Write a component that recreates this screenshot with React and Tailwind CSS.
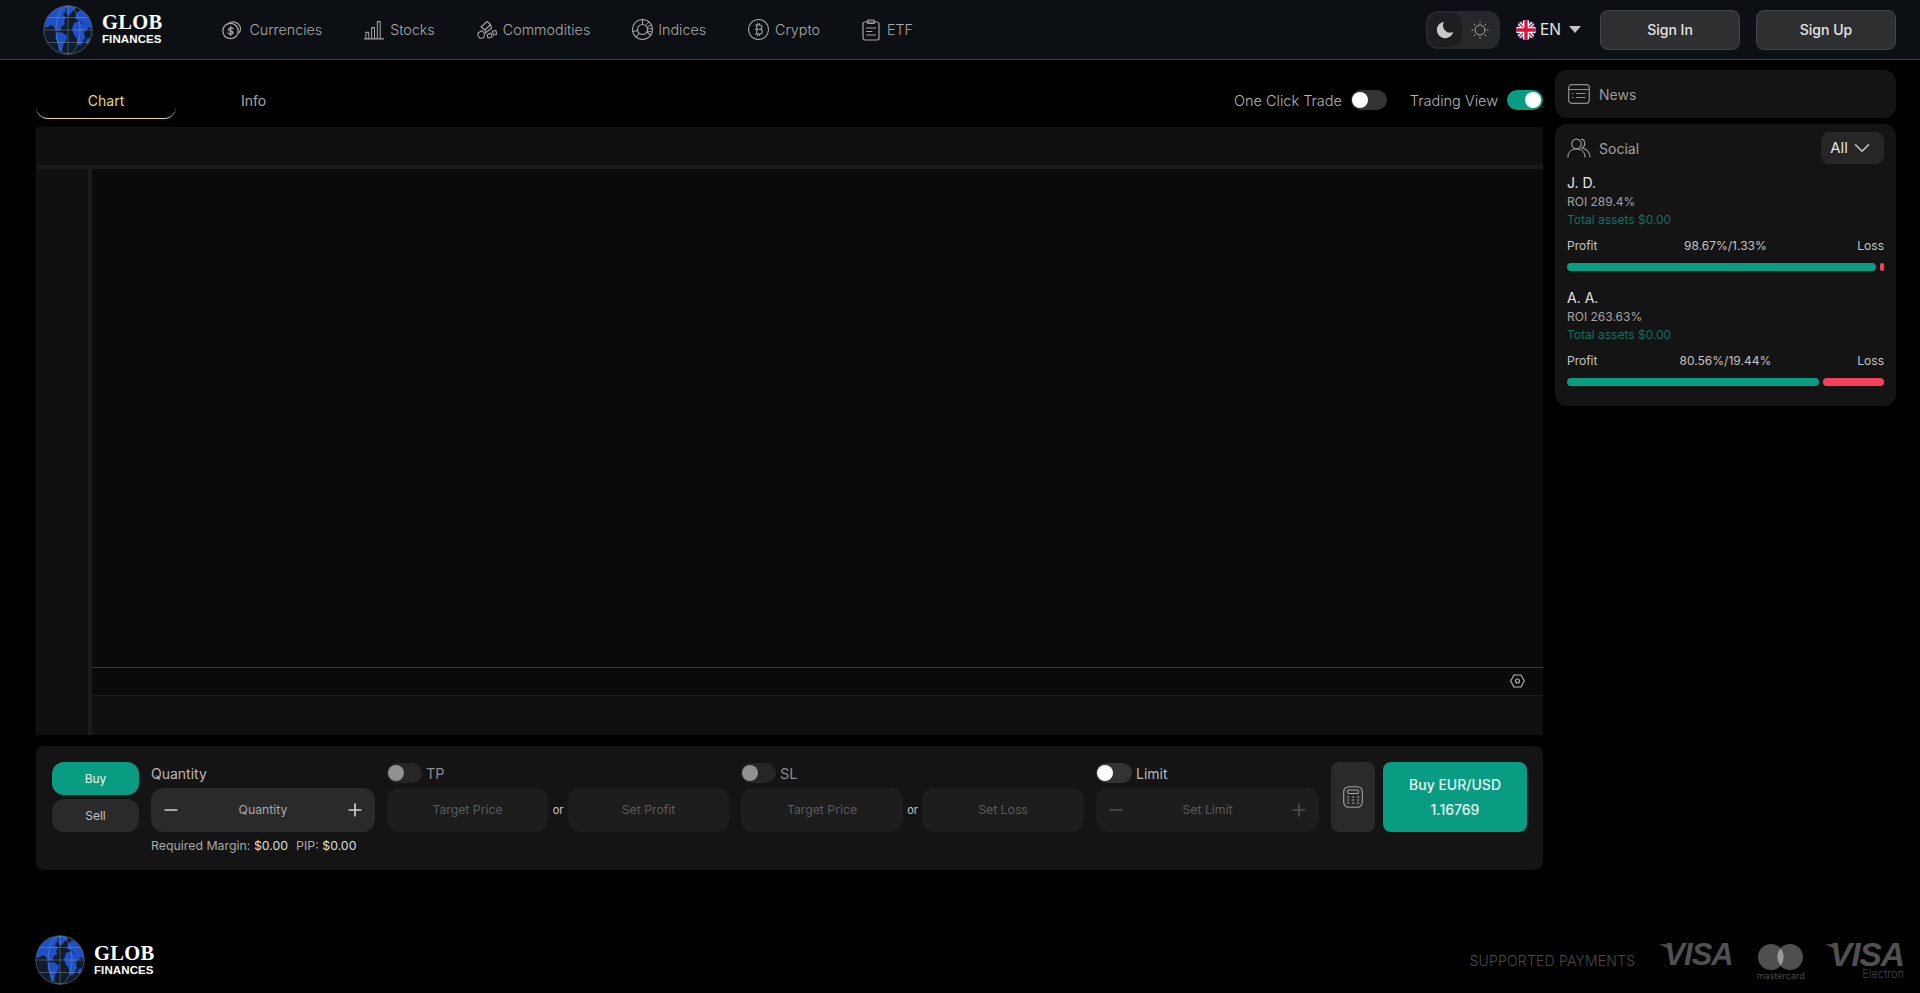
import React from "react";
import { ChevronDown, Minus, Plus } from "lucide-react";

function Globe({ size = 50 }) {
  return (
    <svg width={size} height={size} viewBox="0 0 100 100" className="shrink-0">
      <circle cx="50" cy="50" r="48.5" fill="#0f1c2c" />
      <clipPath id={`g${size}`}><circle cx="50" cy="50" r="48" /></clipPath>
      <g clipPath={`url(#g${size})`} fill="#1f50c8">
        <path d="M2 46 C4 26 14 10 28 5 L44 2 L46 12 L40 20 L46 25 L42 33 L45 38 L38 42 L34 52 L26 50 L22 44 L16 40 L10 44 Z" />
        <path d="M40 3 L60 1 L68 5 L58 14 L52 22 L47 16 L48 9 Z" />
        <path d="M27 54 L38 55 L48 61 L47 70 L41 78 L37 93 L32 93 L30 78 L25 66 Z" />
        <path d="M62 36 L72 32 L80 38 L86 42 L87 48 L82 54 L84 66 L76 80 L70 80 L67 66 L61 58 L58 48 Z" />
        <path d="M64 28 L66 18 L74 10 L84 14 L92 24 L100 38 L96 48 L91 44 L87 52 L83 40 L72 30 Z" />
        <path d="M85 70 L92 66 L96 74 L89 80 Z" />
      </g>
      <g fill="none" stroke="#9aa5a8" strokeWidth="1.1" opacity="0.75">
        <circle cx="50" cy="50" r="48.5" />
        <ellipse cx="50" cy="50" rx="24" ry="48" />
        <path d="M50 2 V98 M2 50 H98 M9 25 H91 M9 75 H91" />
      </g>
    </svg>
  );
}

function Logo({ size = 50, gap = "gap-2" }) {
  return (
    <div className={`flex items-center ${gap}`}>
      <Globe size={size} />
      <div className="flex flex-col items-stretch text-white">
        <span className="font-['Liberation_Serif',serif] font-bold text-[20.5px] leading-[19px] tracking-[0.3px]">GLOB</span>
        <span className="font-['Liberation_Sans',sans-serif] font-bold text-[11.5px] leading-[13px] mt-[1px] tracking-[0.1px]">FINANCES</span>
      </div>
    </div>
  );
}

const ic = { fill: "none", stroke: "#a3a3a3", strokeWidth: 1.1, strokeLinecap: "round", strokeLinejoin: "round" };

const CurrencyIcon = () => (
  <svg width="20" height="20" viewBox="0 0 20 20" {...ic}>
    <path d="M5 4.5 A8 8 0 0 1 18.5 7.5 A8 8 0 0 1 17 13" />
    <circle cx="8.5" cy="11" r="7.7" strokeWidth="1.3" />
    <path d="M11 8.8 C10.4 7.7 6.3 7.6 6.3 9.6 C6.3 11.6 11 10.4 11 12.6 C11 14.5 6.8 14.4 6 13 M8.6 6.6 V15.4" strokeWidth="1.3" />
  </svg>
);
const StocksIcon = () => (
  <svg width="20" height="20" viewBox="0 0 21 20" {...ic}>
    <path d="M0.5 19.3 H20.5 M2 19 V12.5 H5 V19 M8 19 V7.5 H11 V19 M14 19 V1.2 H17 V19" />
  </svg>
);
const CommoditiesIcon = () => (
  <svg width="20" height="20" viewBox="0 0 20 20" {...ic}>
    <path d="M4 7 L10 1.5 L13.5 4.5 L8 10 Z M8 10 L8.5 13 L14.5 8 L13.5 4.5 M1 13 L5 10.5 L7.5 13.5 L7 17.5 L3 18.5 L1 15.5 Z M10 15 L14 13 L15 17 L11 18 Z M15.5 11 L19 10.5 L19.5 14.5 L16.5 15 Z" />
  </svg>
);
const IndicesIcon = () => (
  <svg width="21" height="21" viewBox="0 0 21 21" {...ic}>
    <circle cx="10.5" cy="10.5" r="10" />
    <circle cx="10.5" cy="10.5" r="5" />
    <path d="M10.5 .5 V5.5 M.8 12.5 L5.8 11.5 M15 13 L19 16.5 M4 18 L7 14.5" />
    <path d="M14 6 L17 3 M15.5 8 L19.5 6 M15.5 10 L20 9.5 M15 12 L20 13" strokeWidth="0.9" />
  </svg>
);
const CryptoIcon = () => (
  <svg width="21" height="21" viewBox="0 0 21 21" {...ic}>
    <circle cx="10.5" cy="10.5" r="10" />
    <path d="M7.5 6 H12 C14.5 6 14.5 10.2 12 10.2 H7.5 M12 10.2 C15 10.2 15 15 12 15 H7.5 M8.8 6 V15 M9.5 4.5 V6 M11.5 4.5 V6 M9.5 15 V16.5 M11.5 15 V16.5" />
  </svg>
);
const EtfIcon = () => (
  <svg width="18" height="22" viewBox="0 0 18 22" {...ic} strokeWidth="1.2">
    <rect x="1" y="3" width="16" height="18" rx="2" />
    <rect x="5.5" y="1" width="7" height="3.5" rx="1" />
    <path d="M4.5 9 H13.5 M4.5 12.5 H10 M4.5 16 H13.5" />
  </svg>
);
const MoonIcon = () => (
  <svg width="18" height="18" viewBox="0 0 18 18">
    <path d="M8 .8 A8.3 8.3 0 1 0 17.2 11 A7.2 7.2 0 0 1 8 .8 Z" fill="#c9c9c9" />
  </svg>
);
const SunIcon = () => (
  <svg width="18" height="18" viewBox="0 0 18 18" fill="none" stroke="#a3a3a3" strokeWidth="1" strokeLinecap="round">
    <circle cx="9" cy="9" r="5" />
    <path d="M9 .8 V1.8 M9 16.2 V17.2 M.8 9 H1.8 M16.2 9 H17.2 M3.2 3.2 L3.9 3.9 M14.1 14.1 L14.8 14.8 M3.2 14.8 L3.9 14.1 M14.1 3.9 L14.8 3.2" />
  </svg>
);
const Flag = () => (
  <svg width="20" height="20" viewBox="0 0 20 20" className="shrink-0">
    <clipPath id="fl"><circle cx="10" cy="10" r="10" /></clipPath>
    <g clipPath="url(#fl)">
      <rect width="20" height="20" fill="#1f3a93" />
      <path d="M0 0 L20 20 M20 0 L0 20" stroke="#fff" strokeWidth="4" />
      <path d="M0 0 L20 20 M20 0 L0 20" stroke="#d8143a" strokeWidth="1.4" />
      <path d="M10 0 V20 M0 10 H20" stroke="#fff" strokeWidth="6" />
      <path d="M10 0 V20 M0 10 H20" stroke="#d8143a" strokeWidth="3.4" />
    </g>
  </svg>
);
const NewsIcon = () => (
  <svg width="22" height="20" viewBox="0 0 22 20" fill="none" stroke="#8f8f8f" strokeWidth="1.2" strokeLinecap="round">
    <rect x=".7" y=".7" width="20.6" height="18.6" rx="3" />
    <path d="M.7 5.5 H21.3 M8.5 9.5 H17 M8.5 13.5 H17 M4.5 9.5 H5 M4.5 13.5 H5" />
  </svg>
);
const SocialIcon = () => (
  <svg width="24" height="20" viewBox="0 0 24 20" fill="none" stroke="#9a9a9a" strokeWidth="1.2" strokeLinecap="round">
    <circle cx="9.5" cy="6" r="4.8" />
    <path d="M1 19 C1 14 4.5 11 9.5 11 C14.5 11 18 14 18 19 M14.5 1.4 C18.5 1.6 19 8 15 10 C19 10.8 23 14 23 19" />
  </svg>
);
const CalcIcon = () => (
  <svg width="20" height="22" viewBox="0 0 20 22" fill="none" stroke="#a3a3a3" strokeWidth="1.1" strokeLinecap="round">
    <rect x=".7" y=".7" width="18.6" height="20.6" rx="5" />
    <rect x="4.5" y="4" width="11" height="3.5" rx="1.2" />
    <path d="M5 11 H5.4 M10 11 H10.4 M15 11 H15.4 M5 14 H5.4 M10 14 H10.4 M15 14 H15.4 M5 17 H5.4 M10 17 H10.4 M15 17 H15.4" strokeWidth="1.5" />
  </svg>
);

function NavItem({ icon, label, gap = "gap-[7px]" }) {
  return (
    <div className={`flex items-center ${gap} text-[14.3px] font-light text-[#a8a8a8]`}>
      {icon}
      <span>{label}</span>
    </div>
  );
}

function Toggle({ on, dim }) {
  return (
    <span className={`relative block ${dim ? "w-[35px]" : "w-[36px]"} h-[20px] rounded-full ${on ? "bg-[#0a9c82]" : dim ? "bg-[#262626]" : "bg-[#333333]"}`}>
      <span className={`absolute top-[2px] w-[16px] h-[16px] rounded-full ${on ? "right-[2px] bg-white" : dim ? "left-[1px] bg-[#919191]" : "left-[1px] bg-white"}`} />
    </span>
  );
}

function Stat({ name, roi, pct, green, red, mt }) {
  return (
    <div className={mt}>
      <div className="text-[14px] leading-[18px] text-[#e5e5e5]">{name}</div>
      <div className="text-[12px] leading-[18px] text-[#a3a3a3] mt-[1px]">ROI {roi}</div>
      <div className="text-[12px] leading-[18px] text-[#116f5c]">Total assets $0.00</div>
      <div className="flex justify-between text-[12px] leading-[18px] text-[#c4c4c4] mt-[8px]">
        <span>Profit</span>
        <span className="mr-[4px]">{pct}</span>
        <span>Loss</span>
      </div>
      <div className="flex gap-[4px] h-[8px] mt-[8px]">
        <div className="rounded-full bg-[#0a9c82]" style={{ width: green }} />
        <div className="rounded-full bg-[#f6415c]" style={{ width: red }} />
      </div>
    </div>
  );
}

function Field({ label, w, muted, buttons }) {
  return (
    <div className={`flex items-center h-[44px] rounded-xl ${muted ? "bg-[#1d1d1d]" : "bg-[#2a2a2a]"} ${w}`}>
      {buttons && <Minus size={20} strokeWidth={2} className={`ml-[10px] shrink-0 ${muted ? "text-[#4f4f4f]" : "text-[#d0d0d0]"}`} />}
      <span className={`flex-1 text-center text-[12.25px] ${muted ? "text-[#5a5a5a]" : "text-[#a8a8a8]"}`}>{label}</span>
      {buttons && <Plus size={20} strokeWidth={2} className={`mr-[10px] shrink-0 ${muted ? "text-[#4f4f4f]" : "text-[#d0d0d0]"}`} />}
    </div>
  );
}

function VisaMark({ electron }) {
  return (
    <div className="relative flex flex-col items-end">
      <span className={`relative font-['Liberation_Sans',sans-serif] font-bold italic text-[#505050] leading-[24px] tracking-[-1px] ${electron ? "text-[33.5px]" : "text-[31px]"}`}>
        <svg width="13" height="8" viewBox="0 0 14 8" className="absolute -left-[5px] top-[1px]">
          <path d="M0 0 H10 L14 8 C10 4 5 2 0 0 Z" fill="#505050" />
        </svg>
        VISA
      </span>
      {electron && <span className="text-[11px] leading-[11px] font-light text-[#444444] mt-[2px]">Electron</span>}
    </div>
  );
}

export default function App() {
  return (
    <div className="min-h-[993px] bg-black font-[Inter,sans-serif] flex flex-col overflow-hidden">
      <header className="h-[60px] shrink-0 flex items-center bg-[#0c1014] border-b border-[#3a3a3a] pl-[43px] pr-[24px]">
        <Logo size={50} gap="gap-[9px]" />
        <nav className="flex items-center gap-[42px] ml-[60px]">
          <NavItem icon={<CurrencyIcon />} label="Currencies" />
          <NavItem icon={<StocksIcon />} label="Stocks" gap="gap-[6px]" />
          <NavItem icon={<CommoditiesIcon />} label="Commodities" gap="gap-[6px]" />
          <NavItem icon={<IndicesIcon />} label="Indices" gap="gap-[5px]" />
          <NavItem icon={<CryptoIcon />} label="Crypto" gap="gap-[6px]" />
          <NavItem icon={<EtfIcon />} label="ETF" />
        </nav>
        <div className="ml-auto flex items-center">
          <div className="flex items-center w-[74px] h-[38px] rounded-xl bg-[#26282a] p-[2px]">
            <div className="w-[34px] h-[34px] rounded-[10px] bg-[#1c1e20] flex items-center justify-center"><MoonIcon /></div>
            <div className="flex-1 flex items-center justify-center"><SunIcon /></div>
          </div>
          <div className="flex items-center ml-[16px] gap-[4px]">
            <Flag />
            <span className="text-[15.5px] text-[#e5e5e5]">EN</span>
            <span className="ml-[4px] w-0 h-0 border-x-[6px] border-x-transparent border-t-[7px] border-t-[#c4c4c4]" />
          </div>
          <button className="ml-[19px] w-[140px] h-[40px] rounded-lg bg-[#2e2f30] border border-[#454647] text-[14px] font-medium text-[#e5e5e5]">Sign In</button>
          <button className="ml-[16px] w-[140px] h-[40px] rounded-lg bg-[#2e2f30] border border-[#454647] text-[14px] font-medium text-[#e5e5e5]">Sign Up</button>
        </div>
      </header>

      <main className="flex gap-[12px] pl-[36px] pr-[24px] pt-[10px]">
        <div className="w-[1507px] shrink-0">
          <div className="flex items-center h-[48px] mt-[1px] mb-[8px]">
            <div className="w-[140px] h-[38px] mt-[10px] pt-[1px] flex items-center justify-center text-[14px] text-[#e8d87a] border-b border-[#e8d87a] rounded-b-xl">Chart</div>
            <div className="ml-[65px] w-[24px] text-center text-[14px] text-[#a8a8a8] mt-[10px]">Info</div>
            <div className="ml-auto flex items-center mt-[10px] text-[14.5px] font-light text-[#b4b4b4]">
              <span className="pt-[1px]">One Click Trade</span>
              <span className="ml-[9px]"><Toggle /></span>
              <span className="ml-[23px] pt-[1px]">Trading View</span>
              <span className="ml-[9px]"><Toggle on /></span>
            </div>
          </div>

          <div className="h-[608px] flex flex-col bg-[#101012]">
            <div className="h-[38px] shrink-0" />
            <div className="h-[4px] shrink-0 bg-[#1a1b1d]" />
            <div className="flex-1 flex min-h-0">
              <div className="w-[52px] shrink-0" />
              <div className="w-[4px] shrink-0 bg-[#1a1b1d]" />
              <div className="flex-1 flex flex-col">
                <div className="flex-1 bg-[#0a0a0c]" />
                <div className="h-[28px] shrink-0 bg-[#0a0a0c] border-t border-[#3a3a3c] flex items-center justify-end pr-[18px] pb-[1px]">
                  <svg width="15" height="14" viewBox="0 0 15 14" fill="none" stroke="#b8b8b8" strokeWidth="1.1">
                    <path d="M4 1 H11 L14.3 7 L11 13 H4 L.7 7 Z" />
                    <circle cx="7.5" cy="7" r="2" />
                  </svg>
                </div>
                <div className="h-[40px] shrink-0 border-t border-[#1c1c1e]" />
              </div>
            </div>
          </div>

          <section className="mt-[11px] h-[124px] rounded-lg bg-[#141414] flex items-start gap-[12px] pl-[16px] pr-[16px] pt-[16px]">
            <div className="w-[87px] shrink-0 flex flex-col gap-[4px]">
              <div className="h-[33px] rounded-xl bg-[#0a9c82] flex items-center justify-center text-[12px] text-[#e6f5f1]">Buy</div>
              <div className="h-[33px] rounded-xl bg-[#2a2a2a] flex items-center justify-center text-[12px] text-[#c4c4c4]">Sell</div>
            </div>
            <div className="w-[224px] shrink-0">
              <div className="h-[26px] text-[14px] leading-[24px] text-[#b8b8b8]">Quantity</div>
              <Field label="Quantity" buttons />
              <div className="mt-[5px] text-[12.35px] leading-[18px] text-[#a8a8a8]">
                Required Margin: <span className="text-[#dedede]">$0.00</span><span className="ml-[8px]">PIP: </span><span className="text-[#dedede]">$0.00</span>
              </div>
            </div>
            <div className="w-[342px] shrink-0">
              <div className="h-[26px] flex items-start gap-[4px] pt-[1px]"><Toggle dim /><span className="text-[14.5px] leading-[22px] text-[#8a8a8a]">TP</span></div>
              <div className="flex items-center">
                <Field label="Target Price" muted w="w-[161px]" />
                <span className="w-[20px] text-center text-[11px] text-[#c4c4c4]">or</span>
                <Field label="Set Profit" muted w="w-[161px]" />
              </div>
            </div>
            <div className="w-[343px] shrink-0">
              <div className="h-[26px] flex items-start gap-[4px] pt-[1px]"><Toggle dim /><span className="text-[14.5px] leading-[22px] text-[#8a8a8a]">SL</span></div>
              <div className="flex items-center">
                <Field label="Target Price" muted w="w-[162px]" />
                <span className="w-[19px] text-center text-[11px] text-[#c4c4c4]">or</span>
                <Field label="Set Loss" muted w="w-[162px]" />
              </div>
            </div>
            <div className="w-[223px] shrink-0">
              <div className="h-[26px] flex items-start gap-[4px] pt-[1px]"><Toggle /><span className="text-[14px] leading-[22px] text-[#b8b8b8]">Limit</span></div>
              <Field label="Set Limit" muted buttons />
            </div>
            <div className="w-[44px] h-[70px] shrink-0 rounded-lg bg-[#2a2a2a] flex items-center justify-center"><CalcIcon /></div>
            <div className="-ml-[4px] w-[144px] h-[70px] shrink-0 rounded-lg bg-[#0a9c82] flex flex-col items-center justify-center text-[14px] font-medium leading-[25px] text-[#e6f5f1]">
              <span>Buy EUR/USD</span>
              <span>1.16769</span>
            </div>
          </section>
        </div>

        <aside className="w-[341px] shrink-0 flex flex-col gap-[6px]">
          <div className="h-[48px] rounded-xl bg-[#141414] flex items-center gap-[9px] pl-[13px]">
            <NewsIcon />
            <span className="text-[14px] text-[#9a9a9a]">News</span>
          </div>
          <div className="h-[282px] rounded-xl bg-[#141414] px-[12px] pt-[8px]">
            <div className="flex items-center h-[32px]">
              <SocialIcon />
              <span className="ml-[8px] text-[14px] text-[#a3a3a3]">Social</span>
              <div className="ml-auto w-[63px] h-[32px] rounded-lg bg-[#262626] flex items-center justify-center gap-[1px] text-[15px] text-[#e5e5e5]">
                All <ChevronDown size={26} strokeWidth={1.5} className="text-[#c4c4c4]" />
              </div>
            </div>
            <div className="mt-[10px]">
              <Stat name="J. D." roi="289.4%" pct="98.67%/1.33%" green="309px" red="4px" />
              <Stat name="A. A." roi="263.63%" pct="80.56%/19.44%" green="252px" red="61px" mt="mt-[18px]" />
            </div>
          </div>
        </aside>
      </main>

      <footer className="flex items-center pl-[35px] pr-[16px] mt-[65px] h-[50px]">
        <Logo size={50} gap="gap-[9px]" />
        <div className="ml-auto flex items-center">
          <span className="text-[14px] font-light text-[#4a4a4a] tracking-[0.2px]">SUPPORTED PAYMENTS</span>
          <div className="ml-[29px] -mt-[10px]"><VisaMark /></div>
          <div className="ml-[24px] flex flex-col items-center mt-[3px]">
            <svg width="45" height="26" viewBox="0 0 45 26">
              <circle cx="13" cy="13" r="13" fill="#4f4f4f" />
              <circle cx="32" cy="13" r="13" fill="#4f4f4f" />
              <path d="M22.5 4.5 A13 13 0 0 1 22.5 21.5 A13 13 0 0 1 22.5 4.5 Z" fill="#9a9a9a" />
            </svg>
            <span className="text-[9px] leading-[9px] text-[#4a4a4a] mt-[1px]">mastercard</span>
          </div>
          <div className="ml-[25px] mt-[3px]"><VisaMark electron /></div>
        </div>
      </footer>
    </div>
  );
}
